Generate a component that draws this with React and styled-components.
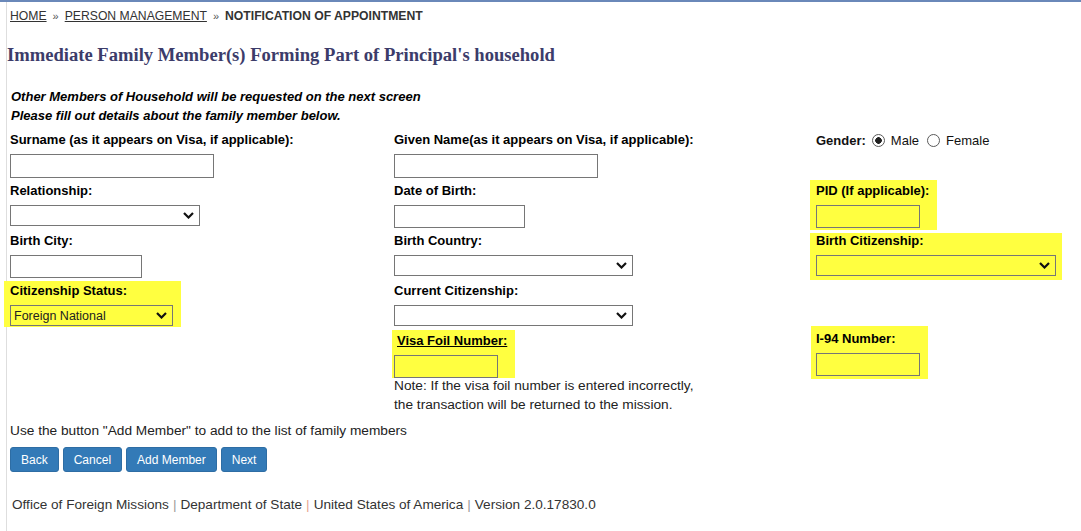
import React from 'react';
import styled, { createGlobalStyle } from 'styled-components';

const GlobalStyle = createGlobalStyle`
    body {
        margin: 0;
        background: #fff;
        font-family: "Liberation Sans", Arial, sans-serif;
        color: #111;
    }
`;

const Page = styled.div`
    border-top: 2px solid #6a88b9;
`;

const Main = styled.div`
    margin-left: 6px;
    border-left: 1px solid #dedede;
    padding: 6px 0 0 3px;
    min-height: 523px;
`;

const Breadcrumb = styled.div`
    display: flex;
    align-items: center;
    gap: 6px;
    font-size: 12.2px;
    line-height: 16px;
    color: #333;
`;

const Crumb = styled.a`
    color: #333;
    text-decoration: underline;
`;

const Sep = styled.span`
    font-size: 11px;
    color: #555;
`;

const Current = styled.span`
    font-weight: bold;
`;

const Heading = styled.h1`
    margin: 20px 0 0 -3px;
    font-family: "Liberation Serif", "Times New Roman", serif;
    font-size: 18.6px;
    line-height: 22px;
    font-weight: bold;
    color: #3c3c6a;
`;

const Intro = styled.div`
    margin: 21px 0 0 1px;
    font-size: 13px;
    line-height: 19px;
    font-weight: bold;
    font-style: italic;
    color: #000;
`;

const FormGrid = styled.div`
    display: grid;
    grid-template-columns: 384px 422px 1fr;
    row-gap: 5px;
    align-items: start;
    margin-top: 7px;
`;

const Field = styled.div`
    display: inline-flex;
    flex-direction: column;
    align-items: flex-start;
    gap: 6px;
    ${p => p.$highlight && `
        background: #ffff40;
        margin: ${p.$pad || '-3px -8px -2px -6px'};
        padding: ${p.$pad ? p.$pad.replace(/-/g, '') : '3px 8px 2px 6px'};
        justify-self: start;
    `}
`;

const Label = styled.label`
    font-size: 13px;
    line-height: 16px;
    font-weight: bold;
    color: #000;
    text-decoration: ${p => (p.$underline ? 'underline' : 'none')};
    padding-left: ${p => (p.$indent ? '3px' : '0')};
`;

const TextInput = styled.input`
    box-sizing: border-box;
    width: ${p => p.$w}px;
    height: ${p => p.$h || 23}px;
    border: 1px solid #767676;
    background: transparent;
    margin: 0;
    padding: 0 3px;
`;

const SelectWrap = styled.div`
    position: relative;
    width: ${p => p.$w}px;
    height: 21px;
`;

const Select = styled.select`
    appearance: none;
    box-sizing: border-box;
    width: 100%;
    height: 100%;
    border: 1px solid #767676;
    border-radius: 0;
    background: transparent;
    margin: 0;
    padding: 0 20px 0 3px;
    font-family: "Liberation Sans", Arial, sans-serif;
    font-size: 12.5px;
    color: #222;
`;

const Chevron = styled.svg`
    position: absolute;
    right: 6px;
    top: 7px;
    pointer-events: none;
`;

const GenderRow = styled.div`
    display: flex;
    align-items: center;
    height: 16px;
    font-size: 13px;
    color: #111;
`;

const GenderLabel = styled.span`
    font-weight: bold;
    margin-right: 6px;
`;

const Radio = styled.span`
    box-sizing: border-box;
    width: 13px;
    height: 13px;
    border-radius: 50%;
    border: 1px solid #5a5a5a;
    margin-right: 6px;
    background: ${p =>
        p.$checked
            ? 'radial-gradient(circle, #222 0 3px, #fff 3.6px)'
            : '#fff'};
`;

const RadioText = styled.span`
    margin-right: 8px;
`;

const Note = styled.div`
    margin-top: -2px;
    font-size: 13.7px;
    line-height: 19px;
    color: #222;
`;

const Instruction = styled.div`
    margin-top: 9px;
    font-size: 13.7px;
    line-height: 16px;
    color: #222;
`;

const ButtonBar = styled.div`
    display: flex;
    gap: 4px;
    margin-top: 8px;
`;

const Button = styled.button`
    height: 25px;
    padding: 0 10px;
    border: 1px solid #2e6da4;
    border-radius: 3px;
    background: #337ab7;
    color: #fff;
    font-family: "Liberation Sans", Arial, sans-serif;
    font-size: 12px;
`;

const Footer = styled.div`
    margin: 25px 0 0 2px;
    font-size: 13.6px;
    line-height: 16px;
    color: #333;
`;

const Pipe = styled.span`
    color: ${p => p.$tint || '#999'};
    margin: 0 4px;
`;

const Dropdown = ({ w, value }) => (
    <SelectWrap $w={w}>
        <Select defaultValue={value || ''}>
            <option value={value || ''}>{value || ''}</option>
        </Select>
        <Chevron width="11" height="7" viewBox="0 0 11 7">
            <path d="M1 1l4.5 4.5L10 1" fill="none" stroke="#111" strokeWidth="2.2" />
        </Chevron>
    </SelectWrap>
);

const App = () => {
    return (
        <Page>
            <GlobalStyle />
            <Main>
                <Breadcrumb>
                    <Crumb>HOME</Crumb>
                    <Sep>»</Sep>
                    <Crumb>PERSON MANAGEMENT</Crumb>
                    <Sep>»</Sep>
                    <Current>NOTIFICATION OF APPOINTMENT</Current>
                </Breadcrumb>

                <Heading>Immediate Family Member(s) Forming Part of Principal's household</Heading>

                <Intro>
                    Other Members of Household will be requested on the next screen
                    <br />
                    Please fill out details about the family member below.
                </Intro>

                <FormGrid>
                    <Field>
                        <Label>Surname (as it appears on Visa, if applicable):</Label>
                        <TextInput $w={204} $h={24} />
                    </Field>
                    <Field>
                        <Label>Given Name(as it appears on Visa, if applicable):</Label>
                        <TextInput $w={204} $h={24} />
                    </Field>
                    <GenderRow>
                        <GenderLabel>Gender:</GenderLabel>
                        <Radio $checked />
                        <RadioText>Male</RadioText>
                        <Radio />
                        <RadioText>Female</RadioText>
                    </GenderRow>

                    <Field>
                        <Label>Relationship:</Label>
                        <Dropdown w={190} />
                    </Field>
                    <Field>
                        <Label>Date of Birth:</Label>
                        <TextInput $w={131} />
                    </Field>
                    <Field $highlight>
                        <Label>PID (If applicable):</Label>
                        <TextInput $w={104} />
                    </Field>

                    <Field>
                        <Label>Birth City:</Label>
                        <TextInput $w={132} />
                    </Field>
                    <Field>
                        <Label>Birth Country:</Label>
                        <Dropdown w={239} />
                    </Field>
                    <Field $highlight $pad="0px -6px -4px -6px">
                        <Label>Birth Citizenship:</Label>
                        <Dropdown w={240} />
                    </Field>

                    <Field $highlight $pad="-2px -8px -1px -6px">
                        <Label>Citizenship Status:</Label>
                        <Dropdown w={163} value="Foreign National" />
                    </Field>
                    <Field>
                        <Label>Current Citizenship:</Label>
                        <Dropdown w={239} />
                    </Field>
                    <div />

                    <div />
                    <div>
                        <Field $highlight $pad="-3px -8px 0px -2px">
                            <Label $underline $indent>Visa Foil Number:</Label>
                            <TextInput $w={104} />
                        </Field>
                        <Note>
                            Note: If the visa foil number is entered incorrectly,
                            <br />
                            the transaction will be returned to the mission.
                        </Note>
                    </div>
                    <Field $highlight $pad="-5px -8px -3px -5px">
                        <Label>I-94 Number:</Label>
                        <TextInput $w={104} />
                    </Field>
                </FormGrid>

                <Instruction>Use the button "Add Member" to add to the list of family members</Instruction>

                <ButtonBar>
                    <Button>Back</Button>
                    <Button>Cancel</Button>
                    <Button>Add Member</Button>
                    <Button>Next</Button>
                </ButtonBar>

                <Footer>
                    Office of Foreign Missions<Pipe>|</Pipe>Department of State
                    <Pipe $tint="#e8a38f">|</Pipe>United States of America<Pipe>|</Pipe>Version 2.0.17830.0
                </Footer>
            </Main>
        </Page>
    );
};

export default App;
